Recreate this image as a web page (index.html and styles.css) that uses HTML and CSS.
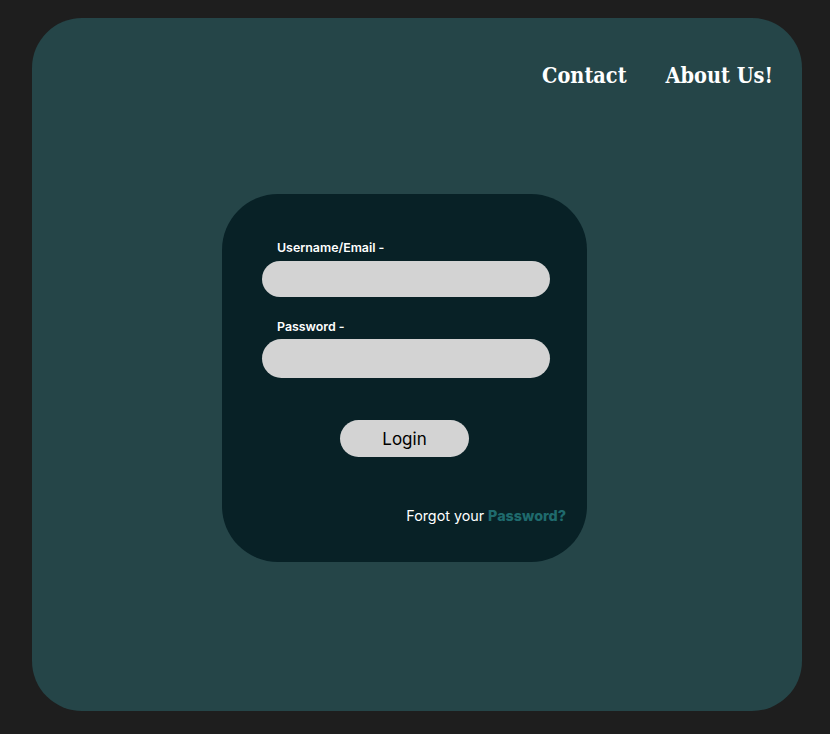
FILE: index.html
```html
<!DOCTYPE html>
<html lang="en">
<head>
<meta charset="utf-8">
<title>Login</title>
<link rel="stylesheet" href="styles.css">
</head>
<body>
<div class="card">
  <nav class="nav">
    <a class="nav-link" href="#">Contact</a>
    <a class="nav-link" href="#">About Us!</a>
  </nav>
  <form class="login">
    <label class="label">Username/Email -</label>
    <div class="input input-user"></div>
    <label class="label label-pass">Password -</label>
    <div class="input input-pass"></div>
    <button class="btn" type="button">Login</button>
    <p class="forgot">Forgot your <span class="forgot-link">Password?</span></p>
  </form>
</div>
</body>
</html>
```
FILE: styles.css
```css
html, body {
  margin: 0;
  padding: 0;
  background: #1e1e1e;
}
body {
  padding: 18px 28px 23px 32px;
  font-family: Inter, "Noto Sans", sans-serif;
}
.card {
  width: 770px;
  height: 693px;
  box-sizing: border-box;
  background: #254548;
  border-radius: 50px;
  padding-top: 42px;
}
.nav {
  display: flex;
  justify-content: flex-end;
  gap: 39px;
  padding-right: 29px;
  height: 30px;
  align-items: center;
}
.nav-link {
  font-family: "DejaVu Serif", "Liberation Serif", serif;
  font-stretch: condensed;
  font-weight: bold;
  font-size: 21.5px;
  color: #ffffff;
  text-decoration: none;
}
.login {
  margin: 104px 0 0 190px;
  width: 365px;
  height: 368px;
  box-sizing: border-box;
  background: #082126;
  border-radius: 56px;
  padding: 40px 37px 0 40px;
  display: flex;
  flex-direction: column;
  align-items: flex-start;
}
.label {
  display: block;
  margin-left: 15px;
  font-size: 12.4px;
  font-weight: 600;
  line-height: 15px;
  color: #ffffff;
  margin-top: 6px;
}
.label-pass {
  margin-top: 22px;
}
.input {
  width: 288px;
  background: #d3d3d3;
  border-radius: 20px;
  margin-top: 6px;
}
.input-user { height: 36px; }
.input-pass { height: 39px; margin-top: 5px; }
.btn {
  margin: 42px 0 0 78px;
  width: 129px;
  height: 37px;
  border: none;
  border-radius: 19px;
  background: #d3d3d3;
  font-family: Inter, "Noto Sans", sans-serif;
  font-size: 17px;
  color: #000000;
  padding: 0;
}
.forgot {
  align-self: flex-end;
  margin: 50px -16px 0 0;
  font-size: 14.3px;
  line-height: 17px;
  color: #ffffff;
}
.forgot-link {
  font-weight: 800;
  color: #1f6a6d;
}
```
